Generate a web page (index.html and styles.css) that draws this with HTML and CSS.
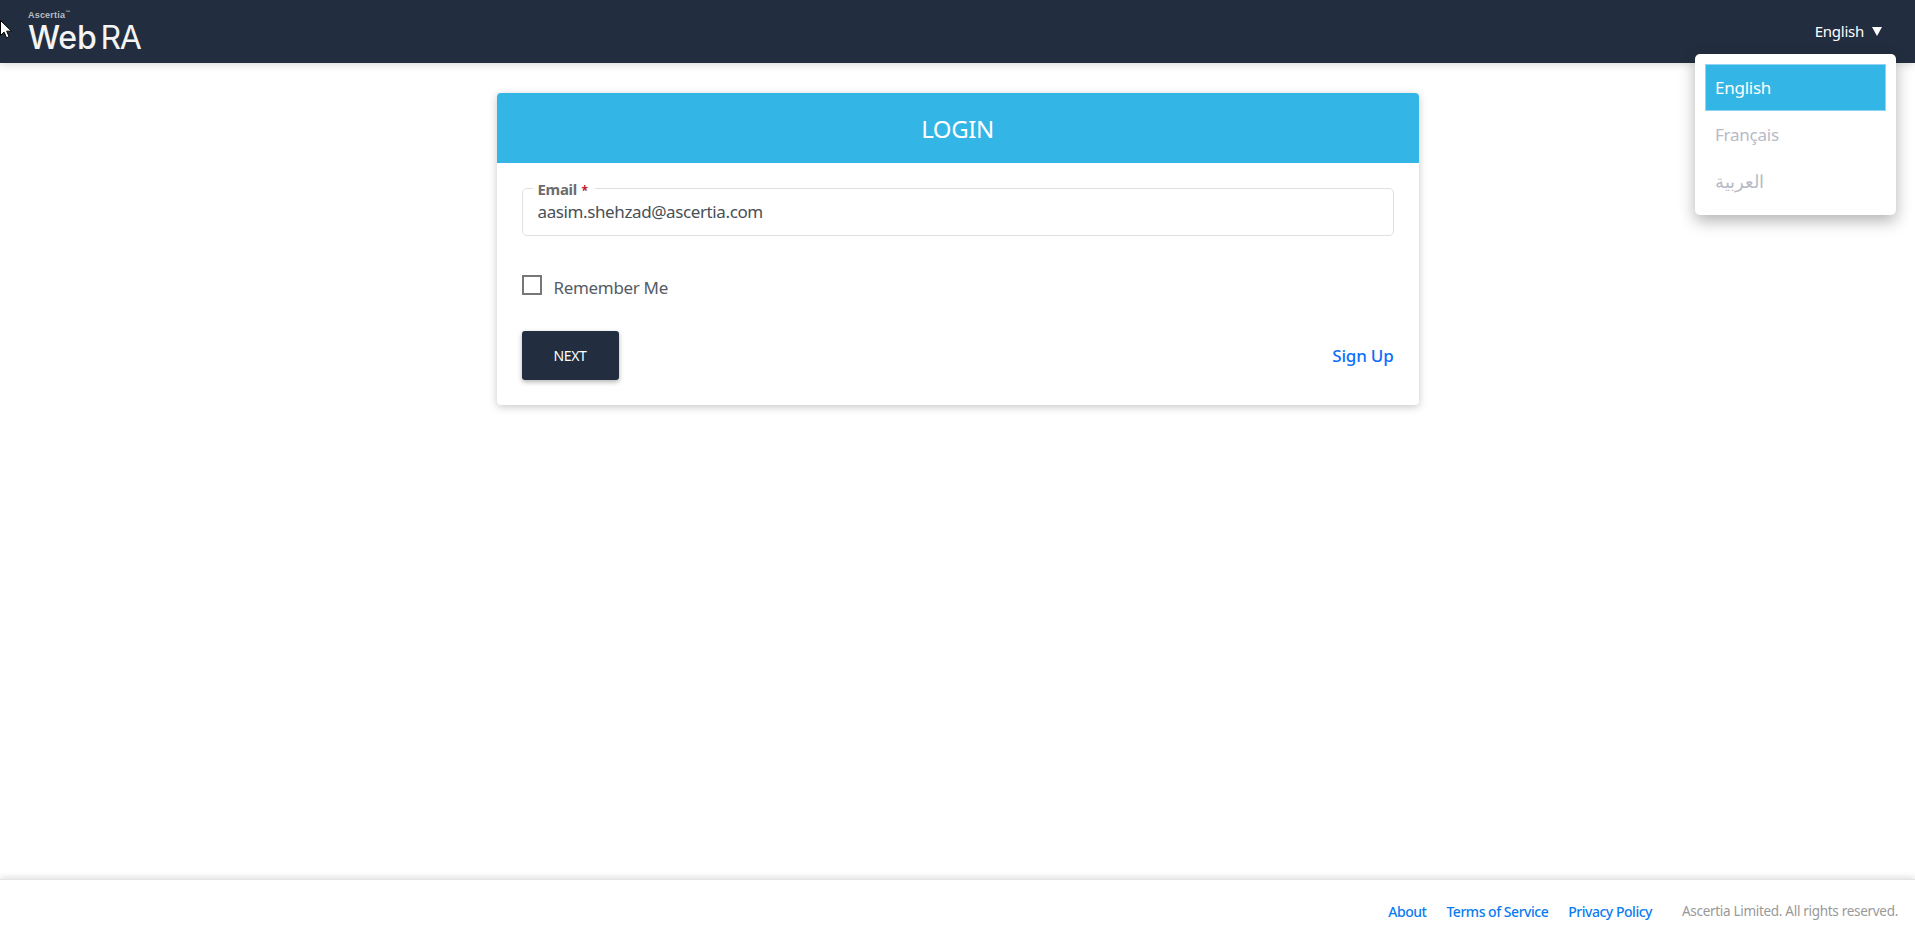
FILE: index.html
```html
<!DOCTYPE html>
<html lang="en">
<head>
<meta charset="utf-8">
<title>WebRA Login</title>
<link rel="stylesheet" href="styles.css">
</head>
<body>
<header class="topbar">
  <div class="logo">
    <span class="logo-small">Ascertia<sup class="tm">™</sup></span>
    <span class="logo-main">Web<span class="logo-ra">RA</span></span>
  </div>
  <button class="lang-toggle" type="button">English <span class="caret"></span></button>
</header>
<ul class="lang-menu">
  <li class="lang-item active">English</li>
  <li class="lang-item">Français</li>
  <li class="lang-item lang-ar" lang="ar">العربية</li>
</ul>
<svg class="cursor" width="12" height="19" viewBox="0 0 12 19"><path d="M.5.5v15l3.6-3.4 2.4 5.7 2.6-1.1-2.4-5.5h4.8z" fill="#fff" stroke="#000" stroke-width="1"/></svg>
<main class="content">
  <section class="card">
    <h1 class="card-head">LOGIN</h1>
    <form class="card-body">
      <fieldset class="field">
        <legend class="field-label">Email <span class="req">*</span></legend>
        <div class="field-value">aasim.shehzad@ascertia.com</div>
      </fieldset>
      <label class="remember"><span class="check"></span><span class="remember-text">Remember Me</span></label>
      <div class="actions">
        <button class="next" type="button">NEXT</button>
        <a class="signup" href="#">Sign Up</a>
      </div>
    </form>
  </section>
</main>
<footer class="footer">
  <a href="#">About</a>
  <a href="#">Terms of Service</a>
  <a href="#">Privacy Policy</a>
  <span class="copy">Ascertia Limited. All rights reserved.</span>
</footer>
</body>
</html>
```
FILE: styles.css
```css
* { box-sizing: border-box; }
html, body { height: 100%; }
body {
  margin: 0;
  display: flex;
  flex-direction: column;
  height: 936px;
  overflow: hidden;
  background: #fff;
  font-family: "Noto Sans", "Open Sans", "Liberation Sans", sans-serif;
  color: #495057;
}
.topbar {
  height: 63px;
  flex: none;
  background: #222e3f;
  display: flex;
  align-items: center;
  justify-content: space-between;
  padding: 0 33px 0 28px;
  box-shadow: 0 2px 8px rgba(0,0,0,.15);
  position: relative;
}
.logo { display: flex; flex-direction: column; color: #f4f4f4; margin-top: 1px; }
.logo-small { font-family: "Liberation Sans", sans-serif; font-size: 9px; line-height: 9px; color: #b9bdc3; font-weight: 700; letter-spacing: .2px; margin-bottom: 2px; }
.tm { font-size: 5px; line-height: 0; vertical-align: 4px; }
.logo-main { font-family: Inter, sans-serif; font-size: 32px; line-height: 32px; font-weight: 500; letter-spacing: -.2px; }
.logo-ra { font-weight: 400; margin-left: 4px; letter-spacing: -1.4px; }
.lang-toggle {
  background: none; border: 0; padding: 0; color: #fff;
  font: inherit; font-size: 15px; display: flex; align-items: center; gap: 8px;
  letter-spacing: -.25px; margin-top: -2px;
}
.caret { width: 0; height: 0; border-left: 5px solid transparent; border-right: 5px solid transparent; border-top: 9px solid #fff; margin-top: 2px; }
.lang-menu {
  position: absolute; left: 1695px; top: 54px; width: 201px; height: 161px;
  margin: 0; padding: 10px; list-style: none; background: #fff; border-radius: 5px;
  box-shadow: 0 6px 16px rgba(0,0,0,.3);
  z-index: 5;
}
.lang-item { height: 47px; line-height: 47px; padding-left: 10px; color: #b8bac6; font-size: 17px; letter-spacing: -.25px; }
.lang-item.active { background: #33b5e6; color: #fff; box-shadow: inset 0 0 0 1px #8dd5f0; }
.lang-ar { font-size: 18px; letter-spacing: 0; }
.cursor { position: absolute; left: 0; top: 20px; z-index: 6; }
.content { flex: 1; padding-top: 30px; display: flex; justify-content: center; align-items: flex-start; }
.card { width: 922px; height: 312px; border-radius: 4px; background: #fff; box-shadow: 0 2px 8px rgba(0,0,0,.22); overflow: hidden; }
.card-head { margin: 0; height: 70px; background: #33b5e6; color: #fff; font-weight: 400; font-size: 24px; line-height: 72px; text-align: center; letter-spacing: -.4px; }
.card-body { padding: 13px 25px 0; }
.field { margin: 0; padding: 0 15px; height: 60px; border: 1px solid #dfdfdf; border-radius: 5px; position: relative; }
.field-label { padding: 3px 7px 0 5px; margin-left: -5px; font-size: 15px; font-weight: 700; color: #6c6c6c; line-height: 20px; letter-spacing: -.3px; }
.req { color: #b21f2d; font-size: 12px; margin-left: 1px; }
.field-value { font-size: 17px; line-height: 24px; color: #495057; letter-spacing: -.39px; margin-top: -1px; }
.remember { display: flex; align-items: center; gap: 12px; margin-top: 39px; font-size: 17px; line-height: 24px; color: #555c66; letter-spacing: -.33px; }
.remember-text { margin-top: 1px; }
.check { width: 20px; height: 20px; border: 2px solid #777; background: #fff; margin-top: -5px; }
.actions { display: flex; justify-content: space-between; align-items: center; margin-top: 31px; }
.next { width: 97px; height: 49px; border: 0; border-radius: 3px; background: #222e3f; color: #fff; font: inherit; font-size: 14px; letter-spacing: -.4px; box-shadow: 0 2px 5px rgba(0,0,0,.3); }
.signup { color: #0d6efd; font-size: 17px; font-weight: 500; text-decoration: none; letter-spacing: -.2px; }
.footer {
  height: 57px; flex: none; display: flex; justify-content: flex-end; align-items: center;
  padding: 6px 17px 0 0; gap: 20px; font-size: 14px; border-top: 1px solid #e4e4e4;
  box-shadow: 0 -2px 6px rgba(0,0,0,.12); position: relative; background: #fff;
}
.footer a { color: #0a7cf0; font-weight: 500; text-decoration: none; letter-spacing: -.48px; }
.copy { color: #999; margin-left: 10px; font-size: 13.5px; letter-spacing: -.3px; }
```
